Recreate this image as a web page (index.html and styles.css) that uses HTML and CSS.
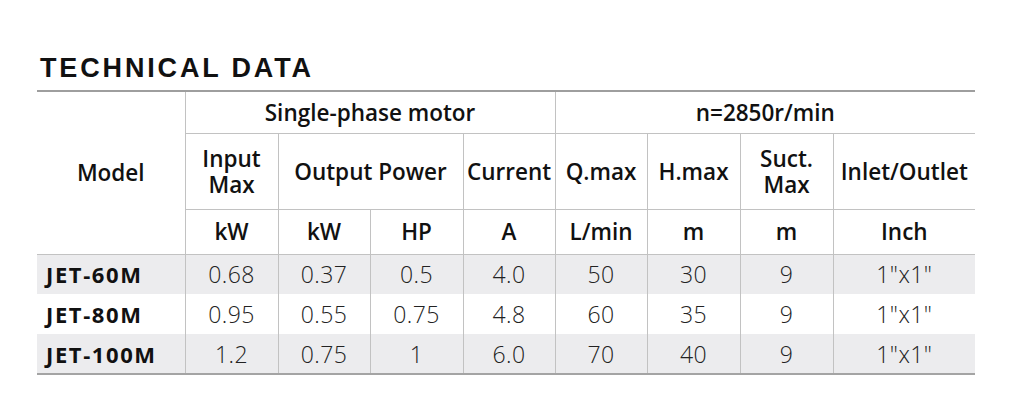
FILE: index.html
```html
<!DOCTYPE html>
<html>
<head>
<meta charset="utf-8">
<link rel="stylesheet" href="styles.css">
</head>
<body>
<div class="page">
  <h1 class="title">TECHNICAL DATA</h1>
  <table class="spec">
    <colgroup>
      <col class="w148">
      <col class="w93"><col class="w92"><col class="w93"><col class="w92">
      <col class="w92"><col class="w93"><col class="w93">
      <col class="w142">
    </colgroup>
    <thead>
      <tr class="r-group">
        <th rowspan="3" class="model-h">Model</th>
        <th colspan="4">Single-phase motor</th>
        <th colspan="4">n=2850r/min</th>
      </tr>
      <tr class="r-names">
        <th class="two"><span class="ln">Input</span><span class="ln">Max</span></th>
        <th colspan="2">Output Power</th>
        <th>Current</th>
        <th>Q.max</th>
        <th>H.max</th>
        <th class="two"><span class="ln">Suct.</span><span class="ln">Max</span></th>
        <th>Inlet/Outlet</th>
      </tr>
      <tr class="r-units">
        <th>kW</th>
        <th>kW</th>
        <th>HP</th>
        <th>A</th>
        <th>L/min</th>
        <th>m</th>
        <th>m</th>
        <th>Inch</th>
      </tr>
    </thead>
    <tbody>
      <tr class="shade">
        <td class="model">JET-60M</td>
        <td>0.68</td><td>0.37</td><td>0.5</td><td>4.0</td>
        <td>50</td><td>30</td><td>9</td><td>1"x1"</td>
      </tr>
      <tr>
        <td class="model">JET-80M</td>
        <td>0.95</td><td>0.55</td><td>0.75</td><td>4.8</td>
        <td>60</td><td>35</td><td>9</td><td>1"x1"</td>
      </tr>
      <tr class="shade">
        <td class="model">JET-100M</td>
        <td>1.2</td><td>0.75</td><td>1</td><td>6.0</td>
        <td>70</td><td>40</td><td>9</td><td>1"x1"</td>
      </tr>
    </tbody>
  </table>
</div>
</body>
</html>
```
FILE: styles.css
```css
* { box-sizing: border-box; }
html, body { margin: 0; padding: 0; background: #fff; }
.page {
  padding: 55px 0 0 37px;
  width: 1032px;
}
.title {
  margin: 0 0 8px 3px;
  font-family: "Liberation Sans", Arial, sans-serif;
  font-weight: 700;
  font-size: 27px;
  line-height: 27px;
  letter-spacing: 2.85px;
  color: #111;
}
.spec {
  border-collapse: collapse;
  table-layout: fixed;
  width: 938px;
  font-family: "Open Sans", "Noto Sans", sans-serif;
  color: #151515;
}
.w148 { width: 148px; }
.w93 { width: 93px; }
.w92 { width: 92px; }
.w142 { width: 142px; }
.spec th, .spec td {
  border: 1px solid #c2c2c2;
  padding: 0;
  text-align: center;
  vertical-align: middle;
  white-space: nowrap;
}
.spec tr > :first-child { border-left: none; }
.spec tr > :last-child { border-right: none; }
.spec thead tr:first-child th { border-top: 2px solid #9e9e9e; }
.spec tbody tr:last-child td { border-bottom: 2px solid #a4a4a4; }
.spec tbody td { border-top: none; border-bottom: none; }
.spec tbody tr:first-child td { border-top: 1px solid #c2c2c2; }
.spec th {
  font-size: 22.5px;
  font-weight: 600;
  line-height: 27px;
  color: #111;
}
.spec th.two { padding-top: 1px; }
.ln {
  display: block;
  line-height: 26px;
  height: 26px;
  overflow: visible;
}
.r-group { height: 42px; }
.r-names { height: 76px; }
.r-units { height: 45px; }
.spec tbody tr { height: 40px; }
.spec td {
  font-size: 23px;
  font-weight: 300;
  letter-spacing: 0.4px;
  line-height: 26px;
  color: #222;
}
.spec td.model {
  text-align: left;
  padding-left: 9px;
  font-size: 22px;
  font-weight: 700;
  letter-spacing: 1.6px;
  color: #111;
}
.shade td { background: #ececee; }
```
